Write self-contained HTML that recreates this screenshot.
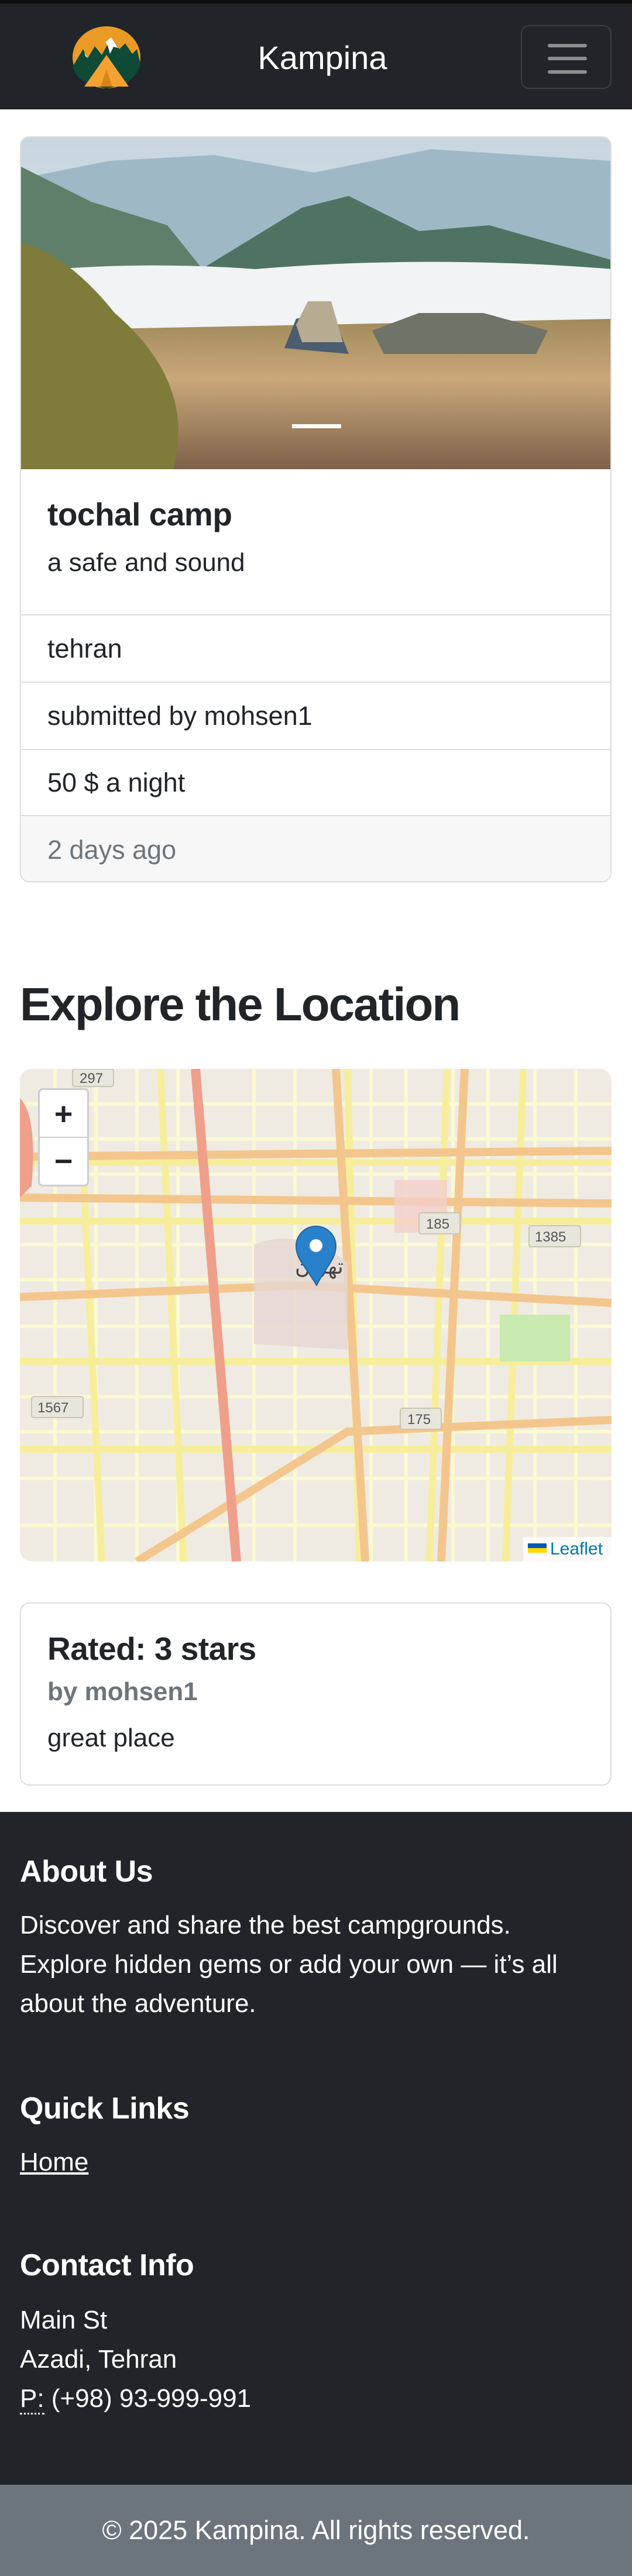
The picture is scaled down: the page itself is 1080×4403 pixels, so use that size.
<!DOCTYPE html>
<html><head><meta charset="utf-8">
<style>
*{box-sizing:border-box;margin:0;padding:0}
body{width:1080px;height:4403px;position:relative;background:#fff;font-family:"Liberation Sans","Noto Sans CJK SC",sans-serif;color:#212529;overflow:hidden}
.abs{position:absolute}
.nav{left:0;top:0;width:1080px;height:187px;background:#212529;border-top:6px solid #0d0f11}
.brand{left:0;width:1080px;top:64px;text-align:center;font-size:56px;color:#fff;line-height:70px;padding-left:22px}
.tog{left:890px;top:43px;width:155px;height:109px;border:2px solid rgba(255,255,255,.12);border-radius:14px}
.tog i{position:absolute;left:44px;width:67px;height:6px;background:#8d8e90;border-radius:3px}
.card{left:34px;top:233px;width:1011px;height:1275px;border:2px solid #dcdcdc;border-radius:16px;overflow:hidden}
.li{position:absolute;left:0;width:100%;border-top:2px solid #dedede;font-size:45px;padding-left:45px;display:flex;align-items:center}
h2{position:absolute;left:34px;top:1662px;font-size:80px;font-weight:bold;line-height:110px;letter-spacing:-2px}
.map{left:34px;top:1827px;width:1011px;height:842px;border-radius:20px;overflow:hidden;background:#efebe3}
.zc{left:65px;top:1860px;width:87px;height:168px;background:#fff;border:3px solid rgba(0,0,0,.2);border-radius:8px;font-size:54px;font-weight:bold;text-align:center}
.rev{left:34px;top:2739px;width:1011px;height:313px;border:2px solid #dcdcdc;border-radius:16px}
.foot{left:0;top:3097px;width:1080px;height:1150px;background:#212529;color:#fff}
.fh{position:absolute;left:34px;font-size:52px;font-weight:bold;letter-spacing:-.5px}
.ft{position:absolute;left:34px;font-size:44px;line-height:67px}
.bot{left:0;top:4247px;width:1080px;height:156px;background:#6c757d;color:#fff;font-size:45px;text-align:center;line-height:156px}
</style></head><body>
<div class="abs nav"></div>
<svg class="abs" style="left:122px;top:44px" width="120" height="108" viewBox="0 0 120 108">
<ellipse cx="60" cy="54" rx="58" ry="53" fill="#eb9a25"/>
<path d="M2 70 L20 40 L28 55 L40 35 L52 50 L68 20 L82 40 L92 30 L104 48 L112 40 L118 65 Q110 100 60 107 Q10 100 2 70Z" fill="#0f4a36"/>
<path d="M58 28 L68 20 L80 38 L72 36 L66 48 L62 34Z" fill="#fff"/>
<path d="M22 45 L28 55 L24 52Z" fill="#fff"/>
<path d="M22 104 L60 50 L98 104Z" fill="#f3a232"/>
<path d="M50 104 L60 75 L70 104Z" fill="#d98416"/>
</svg>
<div class="abs brand">Kampina</div>
<div class="abs tog"><i style="top:30px"></i><i style="top:52px"></i><i style="top:75px"></i></div>

<div class="abs card">
<svg width="1011" height="567" viewBox="0 0 1011 567" preserveAspectRatio="none" style="display:block">
<defs>
<linearGradient id="sky" x1="0" y1="0" x2="0" y2="1"><stop offset="0" stop-color="#c9d6df"/><stop offset="1" stop-color="#dfe7ec"/></linearGradient>
<linearGradient id="gr" x1="0" y1="0" x2="0" y2="1"><stop offset="0" stop-color="#a08a5c"/><stop offset=".4" stop-color="#c9a779"/><stop offset="1" stop-color="#7d624a"/></linearGradient>
</defs>
<rect width="1011" height="567" fill="url(#sky)"/>
<path d="M0 70 L150 40 L330 30 L500 60 L700 20 L1011 40 L1011 250 L0 250Z" fill="#9fb8c6"/>
<path d="M0 50 L120 110 L250 150 L330 250 L0 260Z" fill="#5f7f6a"/>
<path d="M300 230 L480 120 L560 100 L680 160 L800 150 L1011 210 L1011 260 L300 260Z" fill="#4f7363"/>
<path d="M0 230 Q200 210 400 225 Q700 200 1011 225 L1011 330 L0 330Z" fill="#f1f3f4"/>
<path d="M0 330 L1011 310 L1011 567 L0 567Z" fill="url(#gr)"/>
<path d="M0 180 Q80 200 160 300 Q300 420 260 567 L0 567Z" fill="#7f7b3b"/>
<path d="M450 360 L470 310 Q510 300 540 320 L560 370Z" fill="#4b5d6e"/>
<path d="M470 320 L490 280 L530 280 L550 350 L480 350Z" fill="#b7ac92"/>
<path d="M600 330 L680 300 L790 300 L900 330 L880 370 L620 370Z" fill="#6f7368"/>
<rect x="463" y="490" width="84" height="7" fill="#fff"/>
</svg>
<div style="padding:45px 45px;height:246px">
<div style="font-size:55px;line-height:64px;font-weight:bold;letter-spacing:-.5px">tochal camp</div>
<div style="font-size:44px;margin-top:26px">a safe and sound</div>
</div>
<div class="li" style="top:815px;height:115px">tehran</div>
<div class="li" style="top:930px;height:115px">submitted by mohsen1</div>
<div class="li" style="top:1045px;height:113px">50 $ a night</div>
<div class="li" style="top:1158px;height:117px;background:#f7f7f7;color:#6c757d">2 days ago</div>
</div>

<h2>Explore the Location</h2>

<div class="abs map">
<svg width="1011" height="842" viewBox="0 0 1011 842">
<g stroke="#fdfbd0" stroke-width="6" fill="none" opacity=".9">
<path d="M0 60H1011M0 120H1011M0 180H1011M0 300H1011M0 360H1011M0 440H1011M0 560H1011M0 620H1011M0 700H1011M0 780H1011"/>
<path d="M60 0V842M130 0V842M200 0V842M270 0V842M400 0V842M470 0V842M600 0V842M660 0V842M740 0V842M800 0V842M880 0V842M950 0V842"/>
</g>
<g stroke="#f7ee9c" stroke-width="12" fill="none">
<path d="M0 160H1011M0 260H1011M0 500H1011M0 650H1011"/>
<path d="M100 0L140 842M240 0L280 842M560 0L580 842M730 0L700 842M860 0L830 842"/>
</g>
<g stroke="#f3c68d" stroke-width="14" fill="none">
<path d="M0 150L1011 140M0 390L480 370L1011 400M0 220L1011 230"/>
<path d="M540 0L590 842M760 0L720 842M200 842L560 620L1011 600"/>
</g>
<path d="M300 0L370 842" stroke="#ef9f8a" stroke-width="16"/>
<rect x="640" y="190" width="90" height="90" fill="#f2d0cc" opacity=".8"/>
<rect x="820" y="420" width="120" height="80" fill="#c9eab0"/>
<path d="M400 300Q480 270 560 330L560 480L400 470Z" fill="#e6d6d2" opacity=".8"/>
<path d="M0 50Q30 80 20 200L0 220Z" fill="#ef9f8a"/>
<g fill="#e8e6dc" stroke="#c8c5b0" stroke-width="2">
<rect x="682" y="246" width="70" height="36" rx="4"/><rect x="870" y="268" width="88" height="36" rx="4"/>
<rect x="20" y="560" width="88" height="36" rx="4"/><rect x="650" y="580" width="70" height="36" rx="4"/>
<rect x="90" y="0" width="70" height="30" rx="4"/>
</g>
<g font-family="Liberation Sans" font-size="24" fill="#555"><text x="694" y="273">185</text><text x="880" y="295">1385</text><text x="30" y="587">1567</text><text x="662" y="607">175</text><text x="102" y="24">297</text></g>
<text x="470" y="350" font-size="36" fill="#444" font-family="Noto Sans CJK SC,sans-serif">تهران</text>
<path d="M507 370C490 340 472 325 472 303A34 34 0 0 1 540 303C540 325 522 340 507 370Z" fill="#2a81cb" stroke="#2063a0" stroke-width="2"/>
<circle cx="506" cy="302" r="11" fill="#fff"/>
<rect x="860" y="800" width="151" height="42" fill="rgba(255,255,255,.8)"/>
<rect x="868" y="811" width="32" height="8" fill="#0057b7"/><rect x="868" y="819" width="32" height="8" fill="#ffd700"/>
<text x="906" y="830" font-family="Liberation Sans" font-size="30" fill="#0078a8">Leaflet</text>
</svg>
</div>
<div class="abs zc"><div style="height:82px;line-height:82px;border-bottom:2px solid #ccc">+</div><div style="line-height:80px">−</div></div>

<div class="abs rev">
<div style="position:absolute;left:45px;top:45px;font-size:55px;font-weight:bold;letter-spacing:-.5px">Rated: 3 stars</div>
<div style="position:absolute;left:45px;top:126px;font-size:44px;font-weight:bold;color:#6c757d">by mohsen1</div>
<div style="position:absolute;left:45px;top:205px;font-size:44px">great place</div>
</div>

<div class="abs foot">
<div class="fh" style="top:72px">About Us</div>
<div class="ft" style="top:160px">Discover and share the best campgrounds.<br>Explore hidden gems or add your own — it’s all<br>about the adventure.</div>
<div class="fh" style="top:477px">Quick Links</div>
<div class="ft" style="top:565px;text-decoration:underline">Home</div>
<div class="fh" style="top:745px">Contact Info</div>
<div class="ft" style="top:835px">Main St<br>Azadi, Tehran<br><span style="border-bottom:3px dotted #fff">P:</span> (+98) 93-999-991</div>
</div>
<div class="abs bot">© 2025 Kampina. All rights reserved.</div>
</body></html>
